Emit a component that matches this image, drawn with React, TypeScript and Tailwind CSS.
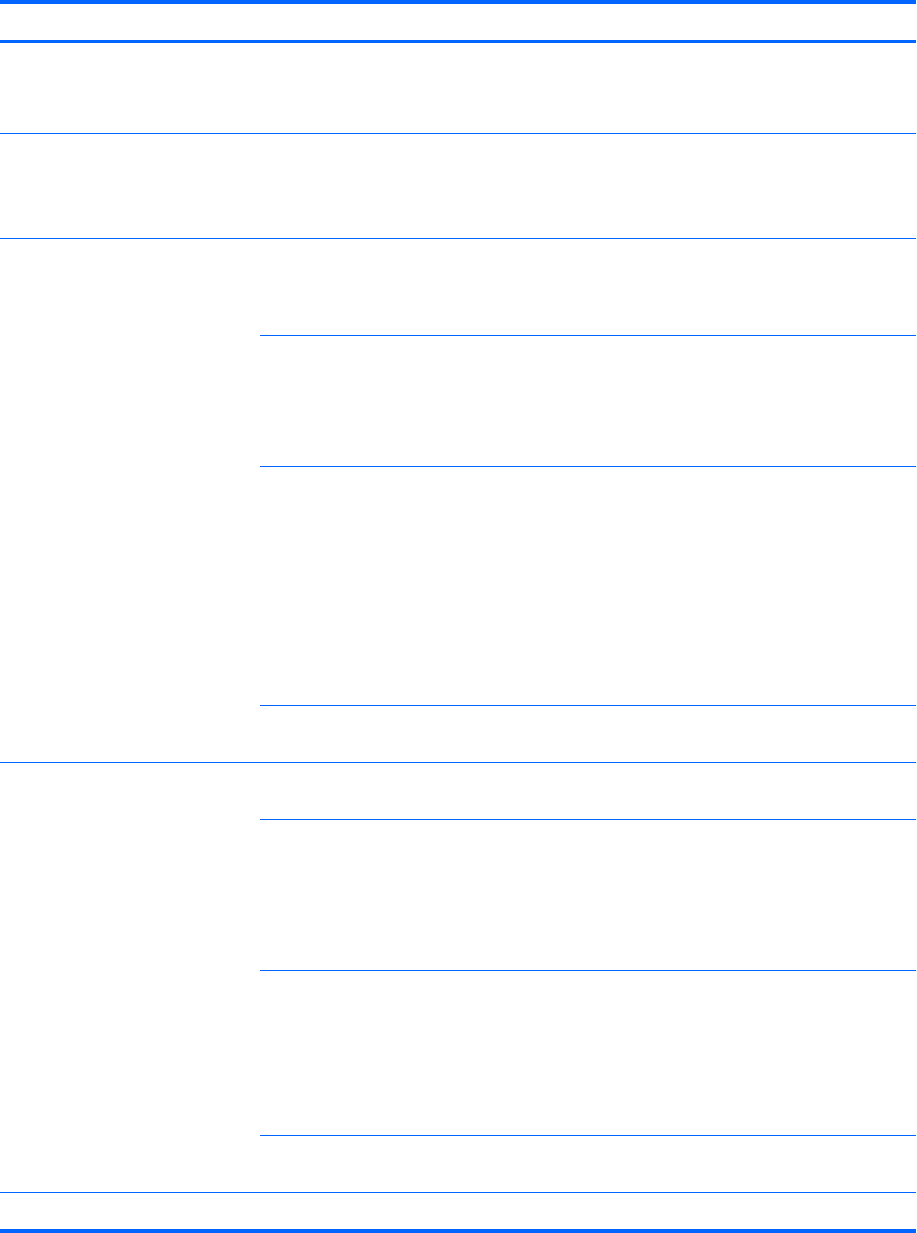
export default function App() {
  const line = "border-[#0066ff]";
  return (
    <div className="w-[917px] bg-white font-['Liberation_Sans',sans-serif]">
      <div className="w-[916px]">
        {/* header */}
        <div className={`h-[43px] border-t-4 border-b-[3px] ${line}`} />
        {/* simple rows */}
        <div className={`h-[91px] border-b ${line}`} />
        <div className={`h-[105px] border-b ${line}`} />

        {/* group with sub rows */}
        <div className={`grid grid-cols-[260px_1fr] border-b ${line}`}>
          <div />
          <div className="flex flex-col">
            <div className={`h-[97px] border-b ${line}`} />
            <div className={`h-[131px] border-b ${line}`} />
            <div className={`h-[239px] border-b ${line}`} />
            <div className="h-[56px]" />
          </div>
        </div>

        <div className={`grid grid-cols-[260px_1fr] border-b ${line}`}>
          <div />
          <div className="flex flex-col">
            <div className={`h-[57px] border-b ${line}`} />
            <div className={`h-[151px] border-b ${line}`} />
            <div className={`h-[165px] border-b ${line}`} />
            <div className="h-[56px]" />
          </div>
        </div>

        <div className={`h-[40px] border-b-4 ${line}`} />
      </div>
    </div>
  );
}
